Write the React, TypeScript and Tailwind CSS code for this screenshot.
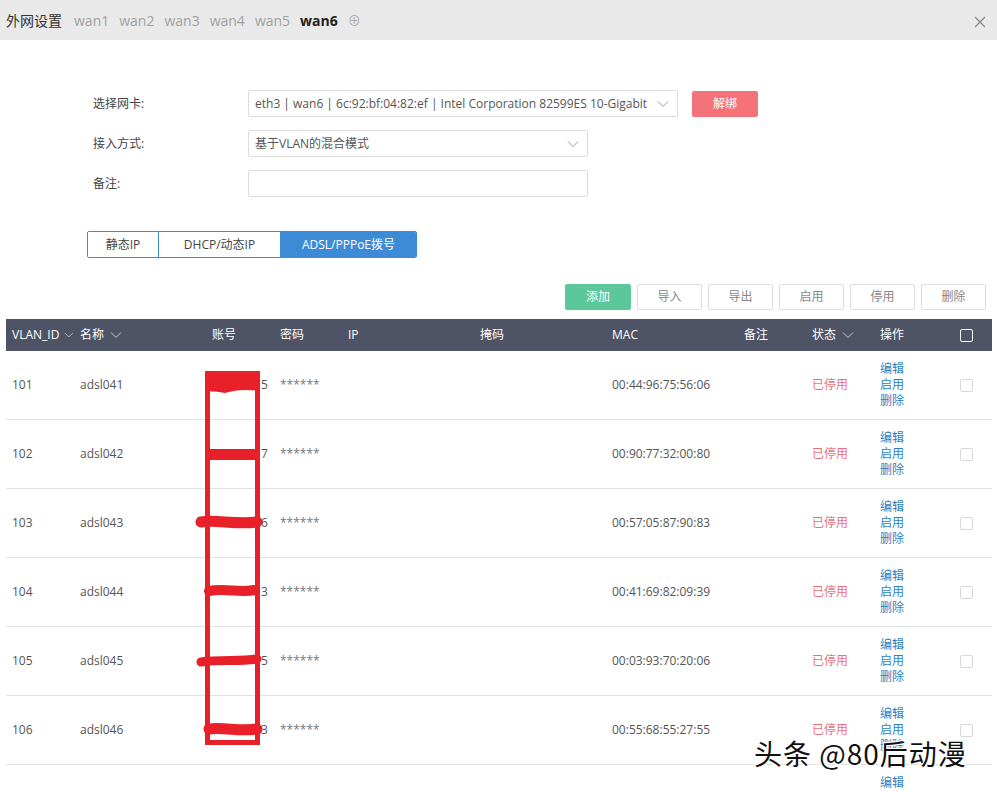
import { useState } from "react";

const FONT = "font-['Open_Sans','Noto_Sans_CJK_SC',sans-serif]";

const rows = [
  { id: "101", name: "adsl041", acc: "5", mac: "00:44:96:75:56:06" },
  { id: "102", name: "adsl042", acc: "7", mac: "00:90:77:32:00:80" },
  { id: "103", name: "adsl043", acc: "6", mac: "00:57:05:87:90:83" },
  { id: "104", name: "adsl044", acc: "3", mac: "00:41:69:82:09:39" },
  { id: "105", name: "adsl045", acc: "5", mac: "00:03:93:70:20:06" },
  { id: "106", name: "adsl046", acc: "3", mac: "00:55:68:55:27:55" },
  { id: "107", name: "adsl047", acc: "", mac: "" },
];

const COLS =
  "grid grid-cols-[68px_132px_68px_68px_132px_132px_132px_68px_68px_72px_46px]";

const Chevron = ({ className = "" }: { className?: string }) => (
  <svg width="12" height="8" viewBox="0 0 12 8" className={className}>
    <path d="M1 1.5 L6 6.5 L11 1.5" fill="none" stroke="currentColor" strokeWidth="1" />
  </svg>
);

const Select = ({ value, w }: { value: string; w: string }) => (
  <div
    className={`${w} flex h-[27px] items-center justify-between rounded-[2px] border border-[#dcdcdc] bg-white pl-[6px] pr-[8px] text-[12px] text-[#555]`}
  >
    <span className="truncate">{value}</span>
    <Chevron className="shrink-0 text-[#999]" />
  </div>
);

const App = () => {
  const [mode, setMode] = useState(2);
  const tabs = ["静态IP", "DHCP/动态IP", "ADSL/PPPoE拨号"];
  const tabW = ["w-[70px]", "w-[122px]", "w-[136px]"];

  return (
    <div className={`relative h-[792px] w-[997px] overflow-hidden bg-white ${FONT}`}>
      {/* top bar */}
      <div className="flex h-[40px] items-center justify-between bg-[#e9e9e9] pl-[6px] pr-[6px]">
        <div className="flex items-center gap-[10px] text-[14px]">
          <span className="mr-[2px] text-[#333]">外网设置</span>
          {["wan1", "wan2", "wan3", "wan4", "wan5"].map((w) => (
            <span key={w} className="text-[#a0a0a0]">
              {w}
            </span>
          ))}
          <span className="font-bold text-[#222]">wan6</span>
          <span className="mt-[2px] text-[13px] text-[#aaa]">⊕</span>
        </div>
        <svg width="12" height="12" viewBox="0 0 12 12" className="mr-[5px] mt-[4px] text-[#888]">
          <path d="M1 1 L11 11 M11 1 L1 11" stroke="currentColor" strokeWidth="1.3" />
        </svg>
      </div>

      {/* form */}
      <div className="flex flex-col gap-[13px] pl-[93px] pt-[50px] text-[12px] text-[#444]">
        <div className="flex items-center">
          <span className="w-[155px]">选择网卡:</span>
          <Select w="w-[430px]" value="eth3 | wan6 | 6c:92:bf:04:82:ef | Intel Corporation 82599ES 10-Gigabit" />
          <button className="ml-[14px] h-[26px] w-[66px] rounded-[2px] bg-[#f4737a] text-[12px] text-white">
            解绑
          </button>
        </div>
        <div className="flex items-center">
          <span className="w-[155px]">接入方式:</span>
          <Select w="w-[340px]" value="基于VLAN的混合模式" />
        </div>
        <div className="flex items-center">
          <span className="w-[155px]">备注:</span>
          <div className="h-[27px] w-[340px] rounded-[2px] border border-[#dcdcdc]" />
        </div>
      </div>

      {/* mode tabs */}
      <div className="ml-[87px] mt-[34px] flex h-[27px] w-fit overflow-hidden rounded-[2px] border border-[#3d8bd6] text-[12px]">
        {tabs.map((t, i) => (
          <button
            key={t}
            onClick={() => setMode(i)}
            className={`${tabW[i]} h-full ${i > 0 ? "border-l border-[#3d8bd6]" : ""} ${
              mode === i ? "bg-[#3d8bd6] text-white" : "bg-white text-[#444]"
            }`}
          >
            {t}
          </button>
        ))}
      </div>

      {/* actions */}
      <div className="mr-[11px] mt-[26px] flex justify-end gap-[6px] text-[12px]">
        <button className="h-[26px] w-[66px] rounded-[2px] bg-[#5cc79b] text-white">添加</button>
        {["导入", "导出", "启用", "停用", "删除"].map((b) => (
          <button
            key={b}
            className="h-[26px] w-[65px] rounded-[2px] border border-[#dedede] bg-white text-[#888]"
          >
            {b}
          </button>
        ))}
      </div>

      {/* table */}
      <div className="relative mx-[6px] mt-[9px] w-[986px]">
        <div className={`${COLS} h-[32px] items-center bg-[#4e5366] text-[12px] text-white`}>
          <span className="flex items-center gap-[5px] pl-[6px]">
            VLAN_ID <Chevron className="text-[#ccc]" />
          </span>
          <span className="flex items-center gap-[6px] pl-[6px]">
            名称 <Chevron className="text-[#ccc]" />
          </span>
          <span className="pl-[6px]">账号</span>
          <span className="pl-[6px]">密码</span>
          <span className="pl-[6px]">IP</span>
          <span className="pl-[6px]">掩码</span>
          <span className="pl-[6px]">MAC</span>
          <span className="pl-[6px]">备注</span>
          <span className="flex items-center gap-[6px] pl-[6px]">
            状态 <Chevron className="text-[#ccc]" />
          </span>
          <span className="pl-[6px]">操作</span>
          <span className="flex justify-center">
            <span className="mr-[6px] block h-[13px] w-[13px] rounded-[2px] border border-white" />
          </span>
        </div>

        {rows.map((r) => (
          <div
            key={r.id}
            className={`${COLS} h-[69px] items-center border-b border-[#e2e2e2] text-[12px] text-[#555]`}
          >
            <span className="pl-[6px]">{r.id}</span>
            <span className="pl-[6px]">{r.name}</span>
            <span className="pl-[55px]">{r.acc}</span>
            <span className="pl-[6px] text-[#777]">******</span>
            <span />
            <span />
            <span className="pl-[6px]">{r.mac}</span>
            <span />
            <span className="pl-[6px] text-[#e8727a]">已停用</span>
            <span className="flex flex-col pl-[6px] leading-[16px] text-[#2f7fc0]">
              <span>编辑</span>
              <span>启用</span>
              <span>删除</span>
            </span>
            <span className="flex justify-center">
              <span className="mr-[6px] block h-[13px] w-[13px] rounded-[2px] border border-[#d8d8d8]" />
            </span>
          </div>
        ))}

        {/* red redaction marks */}
        <svg
          width="80"
          height="400"
          viewBox="0 0 80 400"
          className="pointer-events-none absolute left-[189px] top-[46px]"
        >
          <path d="M10 6 H65 V26 C50 24 40 25 30 28 C22 26 16 27 10 26 Z" fill="#e8202a" />
          <path d="M10 84 H65 V95 H10 Z" fill="#e8202a" />
          <path d="M6 157 C20 154 40 160 62 157" stroke="#e8202a" strokeWidth="11" strokeLinecap="round" fill="none" />
          <path d="M14 226 C30 223 45 228 60 225" stroke="#e8202a" strokeWidth="10" strokeLinecap="round" fill="none" />
          <path d="M6 297 C25 294 45 297 62 294" stroke="#e8202a" strokeWidth="9" strokeLinecap="round" fill="none" />
          <path d="M14 364 C30 362 45 367 62 364" stroke="#e8202a" strokeWidth="11" strokeLinecap="round" fill="none" />
          <rect x="12.5" y="8.5" width="50" height="369" fill="none" stroke="#e8202a" strokeWidth="5" />
        </svg>
      </div>

      {/* watermark */}
      <div className="pointer-events-none absolute left-[754px] top-[735px] font-['Noto_Sans_CJK_SC',sans-serif] text-[28px] leading-[36px] tracking-[1px] text-[#111] [text-shadow:1px_1px_0_#fff,-1px_-1px_0_#fff,1px_-1px_0_#fff,-1px_1px_0_#fff]">
        头条 @80后动漫
      </div>
    </div>
  );
};

export default App;
